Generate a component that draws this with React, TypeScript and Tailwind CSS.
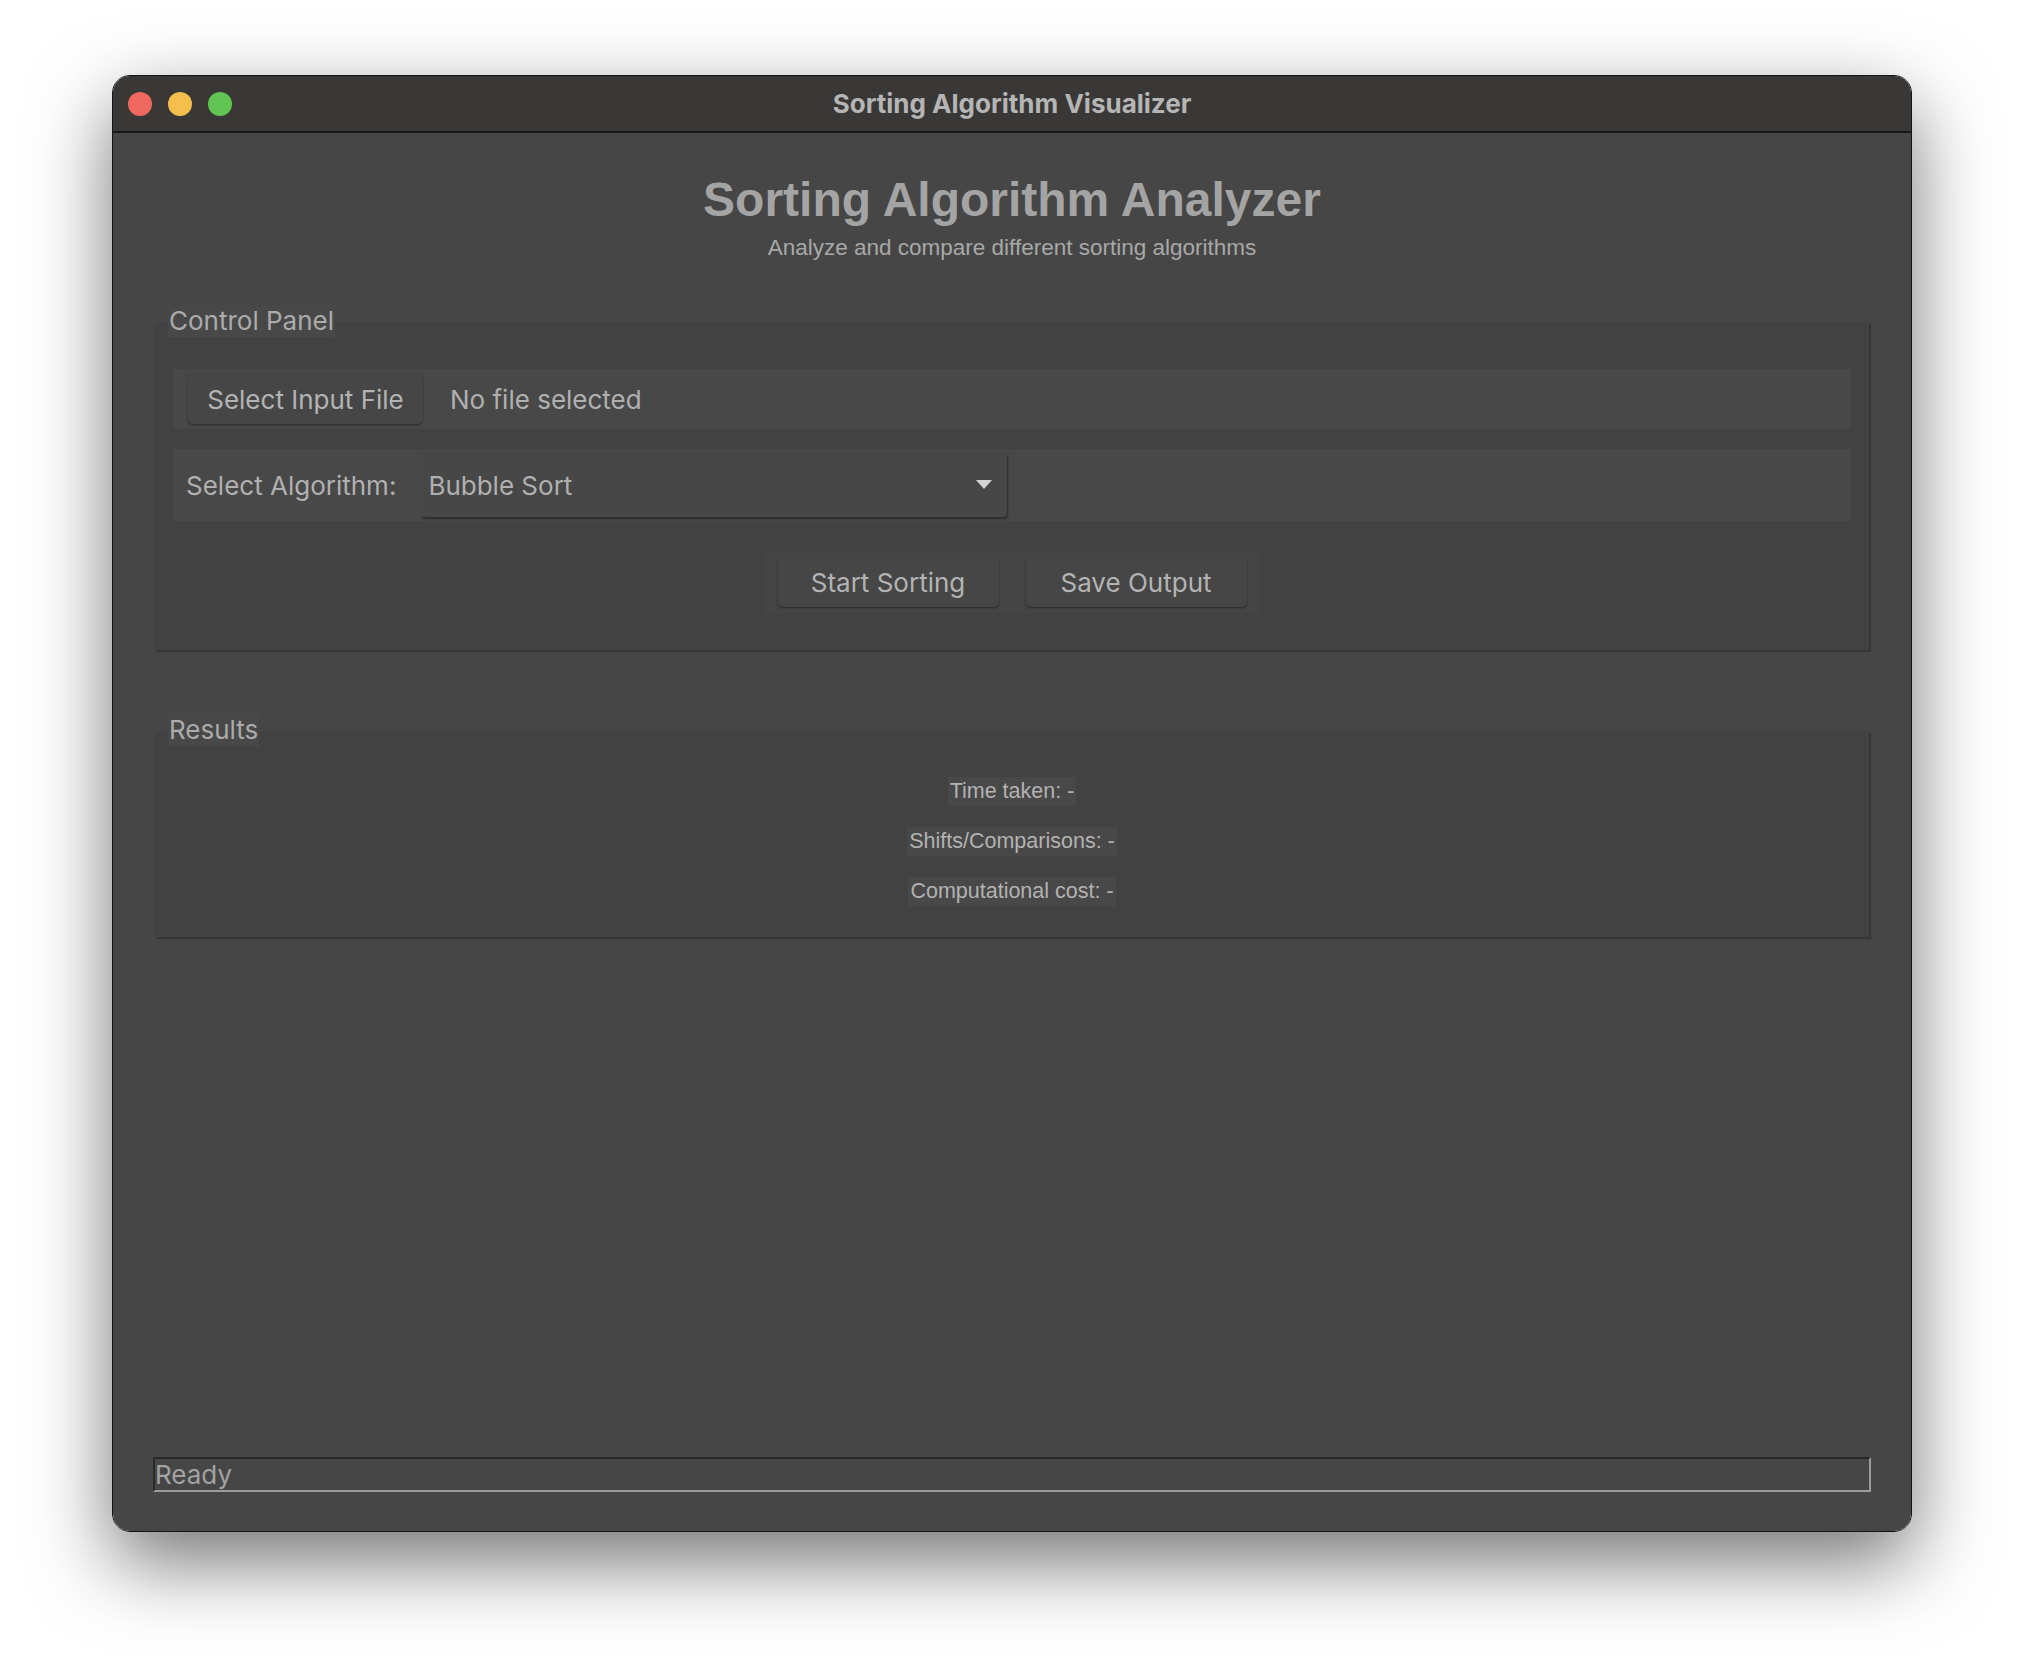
import * as React from "react";

const sf = "font-['Inter','Noto_Sans',sans-serif]";
const helv = "font-['Liberation_Sans','Arial',sans-serif]";

function TrafficLights() {
    return (
        <div className="flex items-center gap-[16px] pl-[15px]">
            <span className="w-[24px] h-[24px] rounded-full bg-[#ee6a5f]" />
            <span className="w-[24px] h-[24px] rounded-full bg-[#f5bf4f]" />
            <span className="w-[24px] h-[24px] rounded-full bg-[#61c554]" />
        </div>
    );
}

function MacButton({ label, className = "" }: { label: string; className?: string }) {
    return (
        <button
            className={`h-[50px] rounded-[5px] bg-[#464646] text-[#b3b3b3] text-[26px] shadow-[0_1px_2px_rgba(0,0,0,0.45)] ${sf} ${className}`}
        >
            {label}
        </button>
    );
}

function GroupFrame({ title, children, className = "" }: { title: string; children: React.ReactNode; className?: string }) {
    return (
        <div className={`bg-[#424242] shadow-[2px_2px_1px_rgba(0,0,0,0.22)] flex flex-col ${className}`}>
            <div className={`-mt-[17px] ml-[13px] w-fit px-[1px] h-[32px] leading-[32px] bg-[#484848] text-[#ababab] text-[26px] ${sf}`}>
                {title}
            </div>
            {children}
        </div>
    );
}

function ResultLine({ text }: { text: string }) {
    return (
        <div className={`mx-auto w-fit px-[2px] h-[29px] leading-[29px] bg-[#484848] text-[#b2b2b2] text-[21.5px] ${helv}`}>
            {text}
        </div>
    );
}

export default function App() {
    const [algorithm] = React.useState("Bubble Sort");

    return (
        <div className="w-[2024px] h-[1680px] bg-white overflow-hidden pt-[75px] pl-[112px]">
            <div className="w-[1800px] h-[1457px] rounded-[18px] overflow-hidden border border-[#151515] shadow-[0_30px_80px_rgba(0,0,0,0.55)] flex flex-col">
                {/* title bar */}
                <div className="h-[57px] shrink-0 bg-[#3a3836] border-b-2 border-[#161616] grid grid-cols-[1fr_auto_1fr] items-center">
                    <TrafficLights />
                    <div className={`text-[26px] font-bold text-[#b5b5b5] ${sf}`}>Sorting Algorithm Visualizer</div>
                    <div />
                </div>

                <div className="flex-1 bg-[#464646] flex flex-col px-[42px]">
                    <h1 className={`mt-[39px] text-center text-[48px] leading-[56px] font-bold text-[#a4a4a4] ${helv}`}>
                        Sorting Algorithm Analyzer
                    </h1>
                    <p className={`mt-[6px] text-center text-[22.5px] leading-[28px] text-[#a8a8a8] ${helv}`}>
                        Analyze and compare different sorting algorithms
                    </p>

                    <GroupFrame title="Control Panel" className="mt-[60px] pb-[37px]">
                        <div className="mt-[32px] mx-[18px] h-[60px] bg-[#484848] flex items-center pl-[15px]">
                            <MacButton label="Select Input File" className="w-[235px] h-[49px]" />
                            <span className={`ml-[27px] text-[26px] text-[#b0b0b0] ${sf}`}>No file selected</span>
                        </div>

                        <div className="mt-[20px] mx-[18px] h-[72px] bg-[#484848] flex items-center pl-[13px]">
                            <span className={`text-[26px] text-[#b0b0b0] ${sf}`}>Select Algorithm:</span>
                            <div className="ml-[25px] w-[586px] h-[64px] rounded-[4px] bg-[#474747] shadow-[1px_2px_2px_rgba(0,0,0,0.4)] flex items-center pl-[7px] pr-[14px]">
                                <span className={`flex-1 text-[26px] text-[#b0b0b0] ${sf}`}>{algorithm}</span>
                                <svg width="18" height="11" viewBox="0 0 18 11" className="mb-[2px]">
                                    <path d="M1 1 L17 1 L9 10 Z" fill="#d4d4d4" />
                                </svg>
                            </div>
                        </div>

                        <div className="mt-[30px] mx-auto w-[496px] h-[62px] bg-[#454545] flex items-center justify-center gap-[27px]">
                            <MacButton label="Start Sorting" className="w-[221px]" />
                            <MacButton label="Save Output" className="w-[221px]" />
                        </div>
                    </GroupFrame>

                    <GroupFrame title="Results" className="mt-[81px] pb-[31px]">
                        <div className="mt-[31px] flex flex-col gap-[21px]">
                            <ResultLine text="Time taken: -" />
                            <ResultLine text="Shifts/Comparisons: -" />
                            <ResultLine text="Computational cost: -" />
                        </div>
                    </GroupFrame>

                    <div className="flex-1" />

                    <div className="mb-[39px] -mx-[2px] h-[35px] border-t-2 border-l-2 border-[#2a2a2a] border-b-2 border-r-2 border-b-[#9c9c9c] border-r-[#9c9c9c] flex items-center">
                        <span className={`text-[26px] leading-[30px] text-[#a2a2a2] ${sf}`}>Ready</span>
                    </div>
                </div>
            </div>
        </div>
    );
}
